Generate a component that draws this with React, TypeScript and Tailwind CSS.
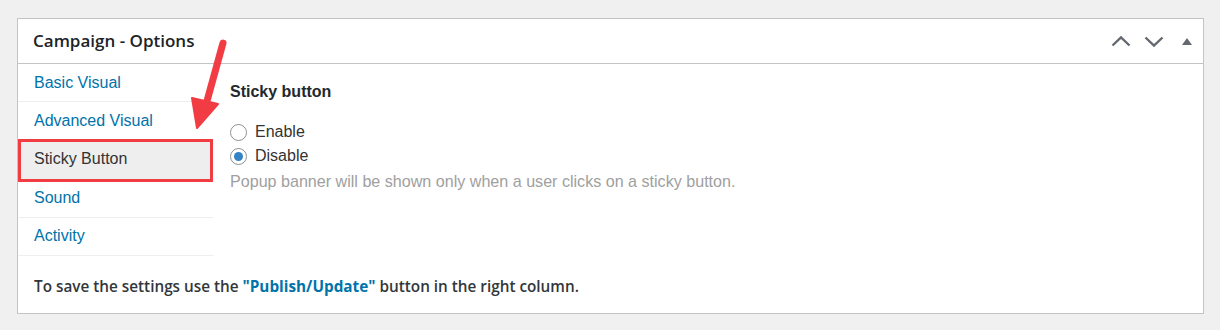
const TABS = ['Basic Visual', 'Advanced Visual', 'Sticky Button', 'Sound', 'Activity'];
const ACTIVE = 'Sticky Button';

function Chevron({ up }: { up?: boolean }) {
  return (
    <svg width="20" height="20" viewBox="0 0 20 20" className="text-[#646970]">
      <path
        d={up ? 'M1.5 14.5 L10 6.5 L18.5 14.5' : 'M1.5 6.5 L10 14.5 L18.5 6.5'}
        fill="none"
        stroke="currentColor"
        strokeWidth="2.4"
      />
    </svg>
  );
}

function Radio({ checked }: { checked?: boolean }) {
  return (
    <span className="flex h-[17px] w-[17px] items-center justify-center rounded-full border border-[#8c8f94] bg-white">
      {checked && <span className="h-[9px] w-[9px] rounded-full bg-[#3582c4]" />}
    </span>
  );
}

export default function App() {
  return (
    <div className="h-[330px] w-[1220px] bg-[#f0f0f1] pl-[17px] pr-[16px] pt-[18px] font-['Liberation_Sans',Arial,sans-serif]">
      <div className="relative h-[296px] border border-[#c3c4c7] bg-white">
        <div className="flex h-[45px] items-center justify-between border-b border-[#c3c4c7] pl-[15px] pr-0">
          <h2 className="font-['Open_Sans',sans-serif] text-[17px] font-semibold text-[#1d2327]">
            Campaign - Options
          </h2>
          <div className="flex items-center">
            <span className="flex w-[33px] justify-center"><Chevron up /></span>
            <span className="flex w-[33px] justify-center"><Chevron /></span>
            <span className="flex w-[33px] justify-center">
              <svg width="10" height="7" viewBox="0 0 10 7" className="text-[#646970]">
                <path d="M0 7 L5 0 L10 7 Z" fill="currentColor" />
              </svg>
            </span>
          </div>
        </div>

        <div className="flex">
          <ul className="w-[195px]">
            {TABS.map((t) => (
              <li
                key={t}
                className={
                  'flex h-[38.4px] items-center border-b border-[#eeeeee] pl-[16px] text-[16px] ' +
                  (t === ACTIVE ? 'bg-[#eeeeee] text-[#333333]' : 'text-[#0073aa]')
                }
              >
                {t}
              </li>
            ))}
          </ul>

          <div className="pl-[17px] pt-[17px] text-[16px]">
            <h3 className="font-bold leading-[22px] text-[#23282d]">Sticky button</h3>
            <div className="mt-[20px] flex flex-col gap-[6px] text-[#333333]">
              <label className="flex h-[18px] items-center gap-[8px]">
                <Radio />
                Enable
              </label>
              <label className="flex h-[18px] items-center gap-[8px]">
                <Radio checked />
                Disable
              </label>
            </div>
            <p className="mt-[6px] text-[16.1px] leading-[20px] text-[#a0a0a0]">
              Popup banner will be shown only when a user clicks on a sticky button.
            </p>
          </div>
        </div>

        <p className="mt-[19px] pl-[16px] font-['Open_Sans',sans-serif] text-[15.3px] font-semibold text-[#32373c]">
          To save the settings use the <span className="font-bold text-[#0073aa]">"Publish/Update"</span> button in the right column.
        </p>

        {/* annotation: red highlight box */}
        <div className="absolute left-[0px] top-[120px] h-[43px] w-[195px] border-[3px] border-[#f23c44]" />

        {/* annotation: red arrow */}
        <svg className="absolute left-[162px] top-[18px]" width="50" height="95" viewBox="0 0 50 95">
          <path d="M43 6 L27 64" stroke="#f23c44" strokeWidth="7" strokeLinecap="round" />
          <path d="M12 61 L38 67 L17 91 Z" fill="#f23c44" stroke="#f23c44" strokeWidth="2" strokeLinejoin="round" />
        </svg>
      </div>
    </div>
  );
}
